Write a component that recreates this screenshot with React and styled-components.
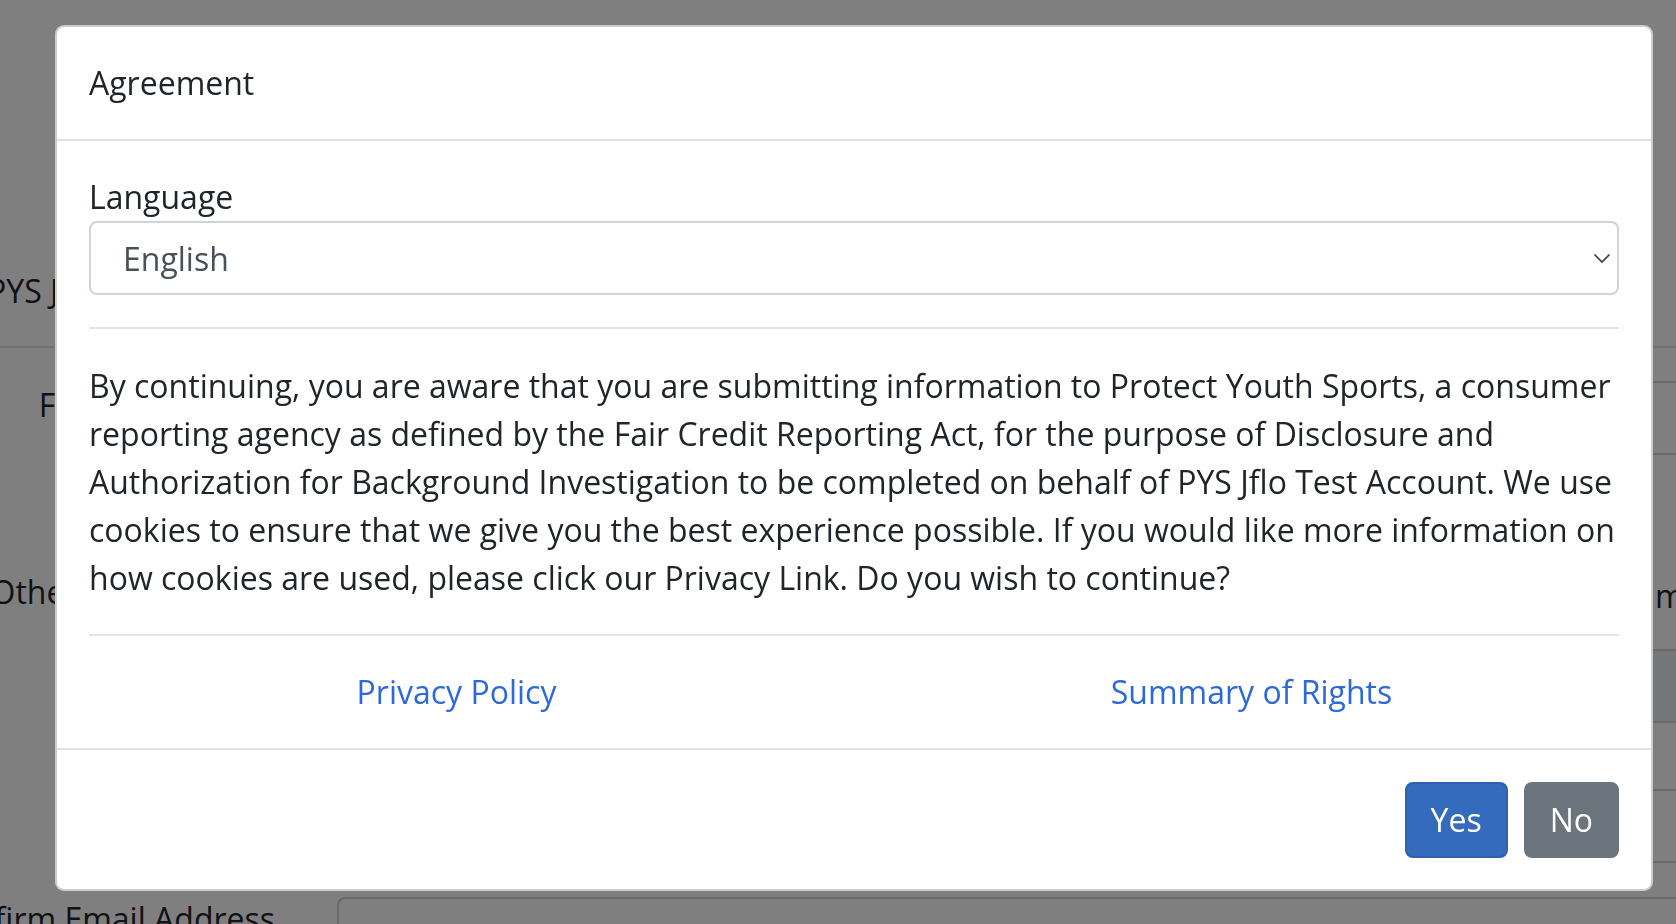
import React from 'react';
import styled, { createGlobalStyle } from 'styled-components';

const GlobalStyle = createGlobalStyle`
  html, body {
    margin: 0;
    padding: 0;
    overflow: hidden;
  }
  body {
    font-family: "Open Sans", "Noto Sans", sans-serif;
    color: #212529;
    background: #fff;
  }
  * { box-sizing: border-box; }
`;

// page behind the dialog (only slivers of it show)
const Page = styled.div`
  width: 1676px;
  height: 924px;
  overflow: hidden;
  background: #fff;
  font-size: 32px;
  line-height: 48px;
`;

const PageTitle = styled.h1`
  margin: 267px 0 0 -13px;
  font-size: 32px;
  font-weight: 400;
  line-height: 48px;
  white-space: nowrap;
`;

const PageRule = styled.hr`
  margin: 31px 0 0;
  border: 0;
  border-top: 2px solid rgba(0, 0, 0, 0.1);
`;

const FormRow = styled.div`
  display: grid;
  grid-template-columns: 275px 1fr;
  column-gap: 62px;
  margin-top: ${p => p.$gap}px;
`;

const RowLabel = styled.label`
  text-align: right;
  white-space: nowrap;
  display: flex;
  justify-content: flex-end;
  margin-top: ${p => p.$offset || 0}px;
`;

const FakeInput = styled.div`
  height: 74px;
  width: 1400px;
  border: 2px solid #ced4da;
  border-radius: 8px;
  background: ${p => (p.$disabled ? '#e9ecef' : '#fff')};
`;

const SideText = styled.div`
  padding-left: 1318px;
  white-space: nowrap;
  margin-top: 4px;
`;

const Backdrop = styled.div`
  position: fixed;
  inset: 0;
  background: rgba(0, 0, 0, 0.5);
`;

const DialogLayer = styled.div`
  position: fixed;
  inset: 0;
  padding: 25px 0 0 55px;
`;

const ModalContent = styled.div`
  width: 1598px;
  background: #fff;
  border: 2px solid rgba(0, 0, 0, 0.2);
  border-radius: 9px;
  display: flex;
  flex-direction: column;
  font-size: 32px;
  line-height: 48px;
`;

const ModalHeader = styled.div`
  padding: 32px;
  border-bottom: 2px solid #dee2e6;
`;

const ModalTitle = styled.h5`
  margin: 0;
  font-size: 32px;
  font-weight: 400;
  line-height: 48px;
`;

const ModalBody = styled.div`
  padding: 32px;
`;

const FieldLabel = styled.label`
  display: block;
`;

const SelectWrap = styled.div`
  position: relative;
`;

const Select = styled.select`
  display: block;
  width: 100%;
  height: 74px;
  padding: 0 60px 0 32px;
  font-family: inherit;
  font-size: 32px;
  color: #495057;
  background: #fff;
  border: 2px solid #ced4da;
  border-radius: 8px;
  appearance: none;
  -webkit-appearance: none;
  outline: none;
`;

const Chevron = styled.svg`
  position: absolute;
  right: 8px;
  top: 32px;
  pointer-events: none;
`;

const Divider = styled.hr`
  margin: 32px 0;
  border: 0;
  border-top: 2px solid rgba(0, 0, 0, 0.1);
`;

const Notice = styled.p`
  margin: 0 0 32px;
  padding-top: 1px;
`;

const LinkRow = styled.div`
  display: grid;
  grid-template-columns: 1fr 1fr;
  margin: 0 -30px;
`;

const LinkCol = styled.div`
  padding: 0 30px;
  text-align: center;
`;

const TextLink = styled.a`
  color: #2d6ad6;
  text-decoration: none;
`;

const ModalFooter = styled.div`
  display: flex;
  justify-content: flex-end;
  padding: 24px 24px 23px;
  border-top: 2px solid #dee2e6;
`;

const Button = styled.button`
  margin: 8px;
  padding: 12px 24px;
  font-family: inherit;
  font-size: 32px;
  line-height: 48px;
  color: #fff;
  border-radius: 8px;
  border: 2px solid ${p => (p.$variant === 'primary' ? '#2f61ad' : '#6c757d')};
  background: ${p => (p.$variant === 'primary' ? '#356bbd' : '#6c757d')};
  cursor: pointer;
`;

export default function App() {
  return (
    <>
      <GlobalStyle />
      <Page>
        <PageTitle>PYS Jflo Test Account</PageTitle>
        <PageRule />
        <FormRow $gap={33}>
          <RowLabel>Full Legal Name</RowLabel>
          <FakeInput />
        </FormRow>
        <FormRow $gap={113}>
          <RowLabel>Other Names Used</RowLabel>
          <SideText>more</SideText>
        </FormRow>
        <FormRow $gap={29}>
          <div />
          <FakeInput $disabled />
        </FormRow>
        <FormRow $gap={66}>
          <div />
          <FakeInput />
        </FormRow>
        <FormRow $gap={34}>
          <RowLabel $offset={-2}>Confirm Email Address</RowLabel>
          <FakeInput />
        </FormRow>
      </Page>

      <Backdrop />
      <DialogLayer>
        <ModalContent role="dialog">
          <ModalHeader>
            <ModalTitle>Agreement</ModalTitle>
          </ModalHeader>
          <ModalBody>
            <FieldLabel htmlFor="language">Language</FieldLabel>
            <SelectWrap>
              <Select id="language" defaultValue="en">
                <option value="en">English</option>
                <option value="es">Español</option>
              </Select>
              <Chevron width="18" height="11" viewBox="0 0 18 11">
                <path d="M1.5 1.5 L9 9 L16.5 1.5" fill="none" stroke="#343a40" strokeWidth="1.6" />
              </Chevron>
            </SelectWrap>
            <Divider />
            <Notice>
              By continuing, you are aware that you are submitting information to Protect Youth Sports, a
              consumer reporting agency as defined by the Fair Credit Reporting Act, for the purpose of
              Disclosure and Authorization for Background Investigation to be completed on behalf of PYS Jflo
              Test Account. We use cookies to ensure that we give you the best experience possible. If you
              would like more information on how cookies are used, please click our Privacy Link. Do you wish
              to continue?
            </Notice>
            <Divider />
            <LinkRow>
              <LinkCol>
                <TextLink href="#privacy">Privacy Policy</TextLink>
              </LinkCol>
              <LinkCol>
                <TextLink href="#rights">Summary of Rights</TextLink>
              </LinkCol>
            </LinkRow>
          </ModalBody>
          <ModalFooter>
            <Button $variant="primary">Yes</Button>
            <Button $variant="secondary">No</Button>
          </ModalFooter>
        </ModalContent>
      </DialogLayer>
    </>
  );
}
